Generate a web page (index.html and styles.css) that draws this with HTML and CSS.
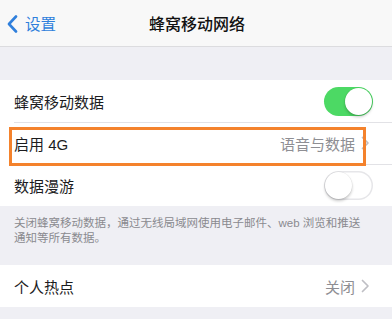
FILE: index.html
```html
<!DOCTYPE html>
<html lang="zh-CN">
<head>
    <meta charset="UTF-8">
    <meta name="viewport" content="width=device-width, initial-scale=1.0">
    <title>蜂窝移动网络</title>
    <link rel="stylesheet" href="styles.css">
</head>
<body>
    <div class="navbar">
        <div class="back">
            <svg class="back-icon" width="11" height="18" viewBox="0 0 11 18">
                <polyline points="9,1.5 2,9 9,16.5" fill="none" stroke="#2f7fdc" stroke-width="2.6" stroke-linecap="round" stroke-linejoin="round"/>
            </svg>
            <span>设置</span>
        </div>
        <div class="nav-title">蜂窝移动网络</div>
    </div>

    <div class="spacer-top"></div>

    <div class="group">
        <div class="cell">
            <span class="cell-label">蜂窝移动数据</span>
            <div class="switch switch-on"><div class="knob"></div></div>
        </div>
        <div class="cell cell-marked">
            <span class="cell-label">启用 4G</span>
            <span class="cell-detail">语音与数据</span>
            <svg class="chevron" width="9" height="14" viewBox="0 0 9 14">
                <polyline points="1.5,1.5 7,7 1.5,12.5" fill="none" stroke="#bfbfc4" stroke-width="1.7" stroke-linecap="round" stroke-linejoin="round"/>
            </svg>
        </div>
        <div class="cell">
            <span class="cell-label">数据漫游</span>
            <div class="switch"><div class="knob"></div></div>
            <div class="highlight"></div>
        </div>
    </div>

    <div class="footer-note">
        关闭蜂窝移动数据，通过无线局域网使用电子邮件、web 浏览和推送通知等所有数据。
    </div>

    <div class="group">
        <div class="cell">
            <span class="cell-label">个人热点</span>
            <span class="cell-detail">关闭</span>
            <svg class="chevron" width="9" height="14" viewBox="0 0 9 14">
                <polyline points="1.5,1.5 7,7 1.5,12.5" fill="none" stroke="#bfbfc4" stroke-width="1.7" stroke-linecap="round" stroke-linejoin="round"/>
            </svg>
        </div>
    </div>
</body>
</html>
```

FILE: styles.css
```css
body {
    margin: 0;
    background-color: #efeff4;
    font-family: "Liberation Sans", "Noto Sans CJK SC", sans-serif;
    color: #1c1c1e;
    overflow: hidden;
}
.navbar {
    position: relative;
    height: 46px;
    background-color: #f8f8f8;
    border-bottom: 1px solid #dcdcdf;
    display: flex;
    align-items: center;
    justify-content: center;
}
.back {
    position: absolute;
    left: 7px;
    top: 0;
    height: 46px;
    display: flex;
    align-items: center;
    color: #2f7fdc;
    font-size: 15.5px;
}
.back-icon {
    margin-right: 7px;
    margin-top: 1px;
}
.nav-title {
    font-size: 16px;
    font-weight: 500;
    color: #111;
    margin-left: 2px;
}
.spacer-top {
    height: 33px;
}
.group {
    background-color: #fff;
}
.cell {
    position: relative;
    height: 42px;
    display: flex;
    align-items: center;
    padding: 0 19px 0 14px;
    font-size: 15px;
}
.cell + .cell::before {
    content: "";
    position: absolute;
    left: 14px;
    right: 0;
    top: 0;
    border-top: 1px solid #e2e2e6;
}
.cell-label {
    flex: 1;
}
.cell-detail {
    color: #8e8e93;
    margin-right: 6px;
}
.chevron {
    margin-right: 3px;
}
/* annotation box around the 4G row, drawn from the row below so it sits on top */
.highlight {
    position: absolute;
    left: 9px;
    top: -37px;
    width: 351px;
    height: 33px;
    border: 3px solid #f4822c;
}
.switch {
    position: relative;
    width: 49px;
    height: 29px;
    border-radius: 15px;
    background-color: #fff;
    box-shadow: inset 0 0 0 1.5px #e6e6e9;
}
.switch-on {
    background-color: #4cd964;
    box-shadow: none;
}
.knob {
    position: absolute;
    top: 1px;
    left: 1px;
    width: 27px;
    height: 27px;
    border-radius: 50%;
    background-color: #fff;
    box-shadow: 0 2px 3px rgba(0,0,0,0.22), 0 0 0 0.5px rgba(0,0,0,0.06);
}
.switch-on .knob {
    left: 21px;
}
.footer-note {
    height: 59px;
    box-sizing: border-box;
    padding: 10px 24px 0 14px;
    font-size: 11.5px;
    line-height: 15px;
    color: #8a8a8f;
}
```
